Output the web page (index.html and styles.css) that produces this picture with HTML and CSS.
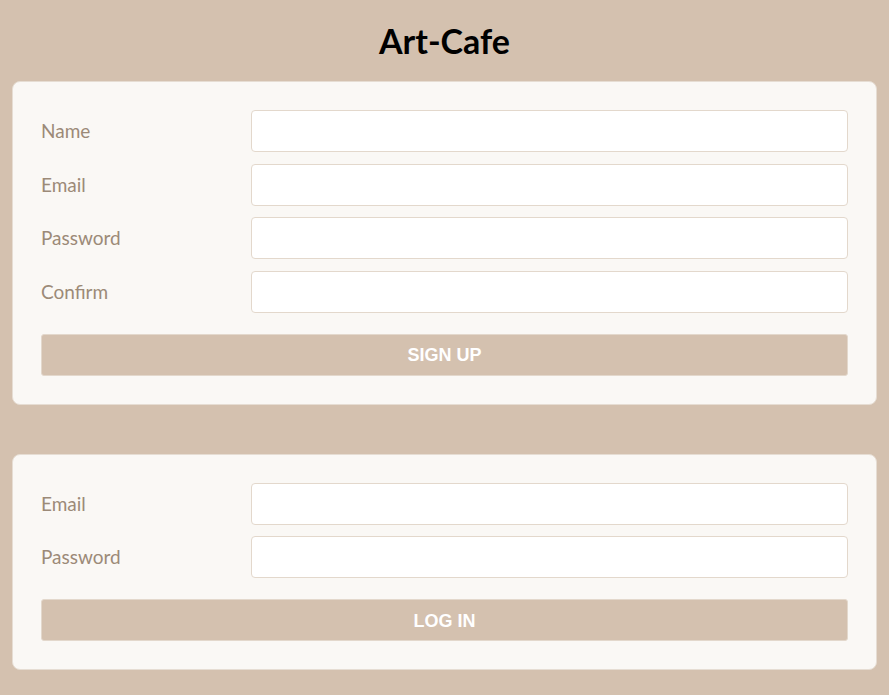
FILE: index.html
```html
<!DOCTYPE html>
<html lang="en">
<head>
<meta charset="utf-8">
<title>Art-Cafe</title>
<link rel="stylesheet" href="styles.css">
</head>
<body>
<h1 class="title">Art-Cafe</h1>
<form class="card">
  <div class="row"><label class="label">Name</label><input class="field" type="text"></div>
  <div class="row"><label class="label">Email</label><input class="field" type="email"></div>
  <div class="row"><label class="label">Password</label><input class="field" type="password"></div>
  <div class="row"><label class="label">Confirm</label><input class="field" type="password"></div>
  <button class="btn" type="button">SIGN UP</button>
</form>
<form class="card">
  <div class="row"><label class="label">Email</label><input class="field" type="email"></div>
  <div class="row"><label class="label">Password</label><input class="field" type="password"></div>
  <button class="btn" type="button">LOG IN</button>
</form>
</body>
</html>
```

FILE: styles.css
```css
html, body {
  margin: 0;
  padding: 0;
}
body {
  background: #d4c1af;
  font-family: Lato, "Open Sans", sans-serif;
  padding: 0 12px;
  display: flex;
  flex-direction: column;
}
.title {
  margin: 0;
  height: 81px;
  display: flex;
  align-items: center;
  justify-content: center;
  font-size: 34px;
  font-weight: 700;
  color: #000;
  padding-bottom: 0;
  box-sizing: border-box;
}
.card {
  background: #faf8f5;
  border: 1px solid #e6ddd3;
  border-radius: 8px;
  padding: 28px;
  display: flex;
  flex-direction: column;
  gap: 11.7px;
  margin: 0 0 49px 0;
}
.row {
  display: flex;
  align-items: center;
}
.label {
  width: 210px;
  flex: none;
  font-size: 19px;
  color: #9c8a78;
  padding-bottom: 1px;
}
.field {
  flex: 1;
  height: 42px;
  box-sizing: border-box;
  border: 1px solid #e3d8cc;
  border-radius: 4px;
  background: #fff;
  margin: 0;
  padding: 0 10px;
}
.btn {
  margin-top: 9px;
  height: 42px;
  padding: 2px 0 0 0;
  background: #d4c1af;
  border: 1px solid #e3d8cc;
  border-radius: 3px;
  color: #fff;
  font-family: "Liberation Sans", Arial, sans-serif;
  font-weight: 700;
  font-size: 18px;
}
```
